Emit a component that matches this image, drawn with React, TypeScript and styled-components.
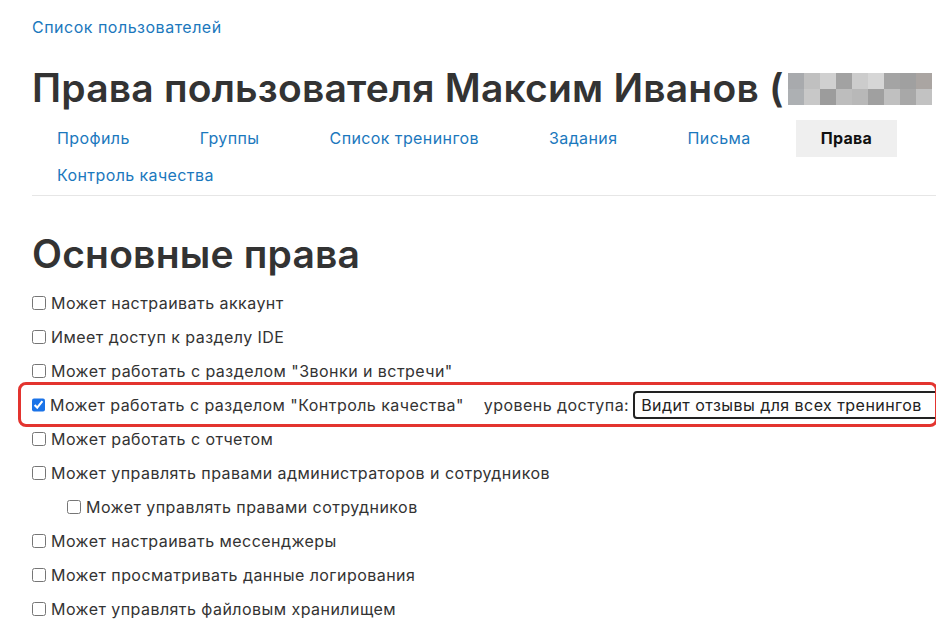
import React, { useState } from 'react';
import styled, { createGlobalStyle } from 'styled-components';

const GlobalStyle = createGlobalStyle`
  html, body {
    margin: 0;
    padding: 0;
    background: #fff;
    overflow: hidden;
  }
  body {
    font-family: 'Inter', 'Noto Sans', sans-serif;
    color: #333;
  }
`;

const Page = styled.div`
  padding: 16px 0 0 32px;
  width: 904px;
  box-sizing: content-box;
`;

const Breadcrumb = styled.a`
  display: inline-block;
  font-size: 16px;
  line-height: 22px;
  color: #1b78bd;
  text-decoration: none;
  letter-spacing: 0.5px;
`;

const Title = styled.h1`
  margin: 26px 0 0;
  font-size: 39px;
  line-height: 48px;
  font-weight: 600;
  color: #333;
  white-space: nowrap;
  display: flex;
  align-items: center;
  letter-spacing: 0.2px;
`;

const Mosaic = styled.span`
  display: inline-grid;
  grid-template-columns: repeat(9, 16px);
  grid-auto-rows: 16px;
  margin-left: 4px;
  margin-top: 2px;
`;

const Cell = styled.span`
  display: block;
`;

const Tabs = styled.nav`
  display: flex;
  flex-wrap: wrap;
  column-gap: 20px;
  margin-top: 8px;
  border-bottom: 1px solid #e6e6e6;
  padding-bottom: 1px;
`;

const Tab = styled.a<{ $active?: boolean }>`
  display: block;
  padding: 0 25px;
  height: 37px;
  line-height: 37px;
  font-size: 16px;
  letter-spacing: ${({ $active }) => ($active ? '0.3px' : '0.4px')};
  color: ${({ $active }) => ($active ? '#111' : '#1b78bd')};
  font-weight: ${({ $active }) => ($active ? 700 : 400)};
  background: ${({ $active }) => ($active ? '#efefef' : 'transparent')};
  text-decoration: none;
  cursor: pointer;
`;

const SectionTitle = styled.h2`
  margin: 34px 0 0;
  font-size: 39px;
  line-height: 48px;
  font-weight: 600;
  color: #333;
  letter-spacing: 0.2px;
`;

const List = styled.div`
  margin-top: 8px;
  display: flex;
  flex-direction: column;
`;

const Row = styled.label<{ $level?: number; $highlight?: boolean }>`
  position: relative;
  display: flex;
  align-items: center;
  height: 34px;
  padding-left: ${({ $level }) => ($level ? $level * 35 : 0)}px;
  font-size: 16px;
  letter-spacing: 0.45px;
  color: #333;
  white-space: nowrap;

  ${({ $highlight }) =>
    $highlight &&
    `
    &::after {
      content: '';
      position: absolute;
      left: -14px;
      right: -2px;
      top: -6px;
      bottom: -5px;
      border: 3.5px solid #e3342f;
      border-radius: 8px;
      pointer-events: none;
    }
  `}
`;

const Check = styled.input`
  width: 14px;
  height: 14px;
  margin: 0 5px 0 0;
  accent-color: #1a73e8;
`;

const Level = styled.span`
  margin-left: 20px;
  margin-right: 4px;
`;

const Select = styled.select`
  font-family: inherit;
  font-size: 16px;
  letter-spacing: 0.45px;
  color: #222;
  height: 28px;
  width: 330px;
  padding: 0 6px;
  border: 2px solid #222;
  border-radius: 4px;
  background: #fff;
  appearance: none;
`;

const mosaic = [
  '#a8aaad', '#c0c0c0', '#d0d0d0', '#a2a2a2', '#cccccc', '#d6d6d6', '#a4a4a4', '#a0a0a0', '#aaa5a2',
  '#adb0b3', '#c8c8c8', '#9c9c9c', '#bdbdbd', '#b8b8b8', '#a0a0a0', '#c0c0c0', '#a8a8a8', '#c2c2c2',
];

const tabs = ['Профиль', 'Группы', 'Список тренингов', 'Задания', 'Письма', 'Права', 'Контроль качества'];

const rights = [
  { label: 'Может настраивать аккаунт' },
  { label: 'Имеет доступ к разделу IDE' },
  { label: 'Может работать с разделом "Звонки и встречи"' },
  { label: 'Может работать с разделом "Контроль качества"', checked: true, access: true },
  { label: 'Может работать с отчетом' },
  { label: 'Может управлять правами администраторов и сотрудников' },
  { label: 'Может управлять правами сотрудников', level: 1 },
  { label: 'Может настраивать мессенджеры' },
  { label: 'Может просматривать данные логирования' },
  { label: 'Может управлять файловым хранилищем' },
];

const App = () => {
  const [active, setActive] = useState('Права');

  return (
    <Page>
      <GlobalStyle />
      <Breadcrumb href="#">Список пользователей</Breadcrumb>
      <Title>
        Права пользователя Максим Иванов (
        <Mosaic>
          {mosaic.map((c, i) => (
            <Cell key={i} style={{ background: c }} />
          ))}
        </Mosaic>
      </Title>
      <Tabs>
        {tabs.map((t) => (
          <Tab key={t} $active={t === active} onClick={() => setActive(t)}>
            {t}
          </Tab>
        ))}
      </Tabs>
      <SectionTitle>Основные права</SectionTitle>
      <List>
        {rights.map((r) => (
          <Row key={r.label} $level={r.level} $highlight={r.access}>
            <Check type="checkbox" defaultChecked={r.checked} />
            {r.label}
            {r.access && (
              <>
                <Level>уровень доступа:</Level>
                <Select defaultValue="all">
                  <option value="all">Видит отзывы для всех тренингов</option>
                  <option value="own">Видит отзывы для своих тренингов</option>
                </Select>
              </>
            )}
          </Row>
        ))}
      </List>
    </Page>
  );
};

export default App;
